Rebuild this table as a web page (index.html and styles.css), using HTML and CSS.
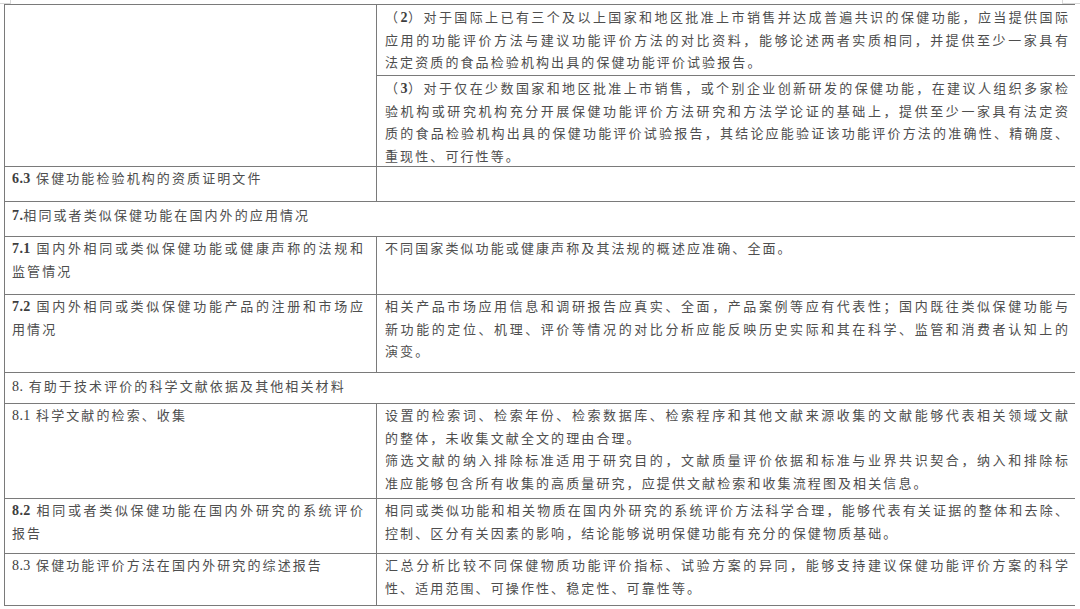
FILE: index.html
```html
<!DOCTYPE html>
<html lang="zh-CN">
<head>
<meta charset="utf-8">
<title>保健功能评价材料要求</title>
<link rel="stylesheet" href="styles.css">
</head>
<body>
<div class="mark mark-tl"></div>
<div class="mark mark-tr"></div>
<div class="sheet">
  <div class="cell blank"></div>
  <div class="cell rt">
    <span class="ln"><span class="par">（<b class="num">2</b>）</span>对于国际上已有三个及以上国家和地区批准上市销售并达成普遍共识的保健功能，应当提供国际</span>
    <span class="ln">应用的功能评价方法与建议功能评价方法的对比资料，能够论述两者实质相同，并提供至少一家具有</span>
    <span class="ln last">法定资质的食品检验机构出具的保健功能评价试验报告。</span>
  </div>
  <div class="cell rt">
    <span class="ln"><span class="par">（<b class="num">3</b>）</span>对于仅在少数国家和地区批准上市销售，或个别企业创新研发的保健功能，在建议人组织多家检</span>
    <span class="ln">验机构或研究机构充分开展保健功能评价方法研究和方法学论证的基础上，提供至少一家具有法定资</span>
    <span class="ln">质的食品检验机构出具的保健功能评价试验报告，其结论应能验证该功能评价方法的准确性、精确度、</span>
    <span class="ln last">重现性、可行性等。</span>
  </div>

  <div class="cell lt"><span class="ln last"><b class="num">6.3</b> 保健功能检验机构的资质证明文件</span></div>
  <div class="cell rt"></div>

  <div class="cell full"><span class="ln last"><b class="num">7.</b>相同或者类似保健功能在国内外的应用情况</span></div>

  <div class="cell lt">
    <span class="ln"><b class="num">7.1</b>&nbsp;国内外相同或类似保健功能或健康声称的法规和</span>
    <span class="ln last">监管情况</span>
  </div>
  <div class="cell rt"><span class="ln last">不同国家类似功能或健康声称及其法规的概述应准确、全面。</span></div>

  <div class="cell lt">
    <span class="ln"><b class="num">7.2</b>&nbsp;国内外相同或类似保健功能产品的注册和市场应</span>
    <span class="ln last">用情况</span>
  </div>
  <div class="cell rt">
    <span class="ln">相关产品市场应用信息和调研报告应真实、全面，产品案例等应有代表性；国内既往类似保健功能与</span>
    <span class="ln">新功能的定位、机理、评价等情况的对比分析应能反映历史实际和其在科学、监管和消费者认知上的</span>
    <span class="ln last">演变。</span>
  </div>

  <div class="cell full"><span class="ln last"><span class="num">8.</span> 有助于技术评价的科学文献依据及其他相关材料</span></div>

  <div class="cell lt"><span class="ln last"><span class="num">8.1</span> 科学文献的检索、收集</span></div>
  <div class="cell rt">
    <span class="ln">设置的检索词、检索年份、检索数据库、检索程序和其他文献来源收集的文献能够代表相关领域文献</span>
    <span class="ln last">的整体，未收集文献全文的理由合理。</span>
    <span class="ln">筛选文献的纳入排除标准适用于研究目的，文献质量评价依据和标准与业界共识契合，纳入和排除标</span>
    <span class="ln last">准应能够包含所有收集的高质量研究，应提供文献检索和收集流程图及相关信息。</span>
  </div>

  <div class="cell lt">
    <span class="ln"><b class="num">8.2</b>&nbsp;相同或者类似保健功能在国内外研究的系统评价</span>
    <span class="ln last">报告</span>
  </div>
  <div class="cell rt">
    <span class="ln">相同或类似功能和相关物质在国内外研究的系统评价方法科学合理，能够代表有关证据的整体和去除、</span>
    <span class="ln last">控制、区分有关因素的影响，结论能够说明保健功能有充分的保健物质基础。</span>
  </div>

  <div class="cell lt"><span class="ln last"><span class="num">8.3</span> 保健功能评价方法在国内外研究的综述报告</span></div>
  <div class="cell rt">
    <span class="ln">汇总分析比较不同保健物质功能评价指标、试验方案的异同，能够支持建议保健功能评价方案的科学</span>
    <span class="ln last">性、适用范围、可操作性、稳定性、可靠性等。</span>
  </div>
</div>
</body>
</html>
```

FILE: styles.css
```css
html, body {
  margin: 0;
  padding: 0;
  background: #ffffff;
}

body {
  width: 1080px;
  height: 609px;
  overflow: hidden;
  position: relative;
  font-family: "Liberation Serif", "Noto Sans CJK SC", serif;
  font-size: 13px;
  color: #4e4e4e;
}

.sheet {
  margin: 4px 0 0 4px;
  width: 1071px;
  box-sizing: border-box;
  display: grid;
  grid-template-columns: 371px 698px;
  grid-template-rows: 70px 90px 34px 34px 57px 77px 30px 94px 54px 51px;
  gap: 1px;
  padding: 1px;
  background: #7a7a7a;
}

.cell {
  background: #ffffff;
  line-height: 22.5px;
  letter-spacing: 2.1px;
  padding-top: 1px;
  overflow: hidden;
}

.blank {
  grid-row: span 2;
}

.lt {
  padding-left: 7px;
  padding-right: 11px;
}

.rt {
  padding-left: 8px;
  padding-right: 5px;
}

.full {
  grid-column: 1 / -1;
  padding-left: 7px;
  padding-top: 3px;
}

.ln {
  display: block;
  text-align: justify;
  text-align-last: justify;
}

.ln.last {
  text-align-last: left;
}

.num {
  font-family: "Liberation Serif", serif;
  font-size: 14px;
  font-weight: normal;
  letter-spacing: 0.4px;
  color: #3e3e3e;
}

b.num {
  font-weight: bold;
}

.par {
  font-family: "Noto Sans CJK SC", sans-serif;
}

.mark {
  position: absolute;
  top: 0;
  width: 10px;
  height: 3px;
  border-bottom: 1px solid #d8d8d8;
}

.mark-tl {
  left: 0;
  border-right: 1px solid #d8d8d8;
}

.mark-tr {
  left: 1062px;
  border-left: 1px solid #d8d8d8;
  width: 18px;
}
```
